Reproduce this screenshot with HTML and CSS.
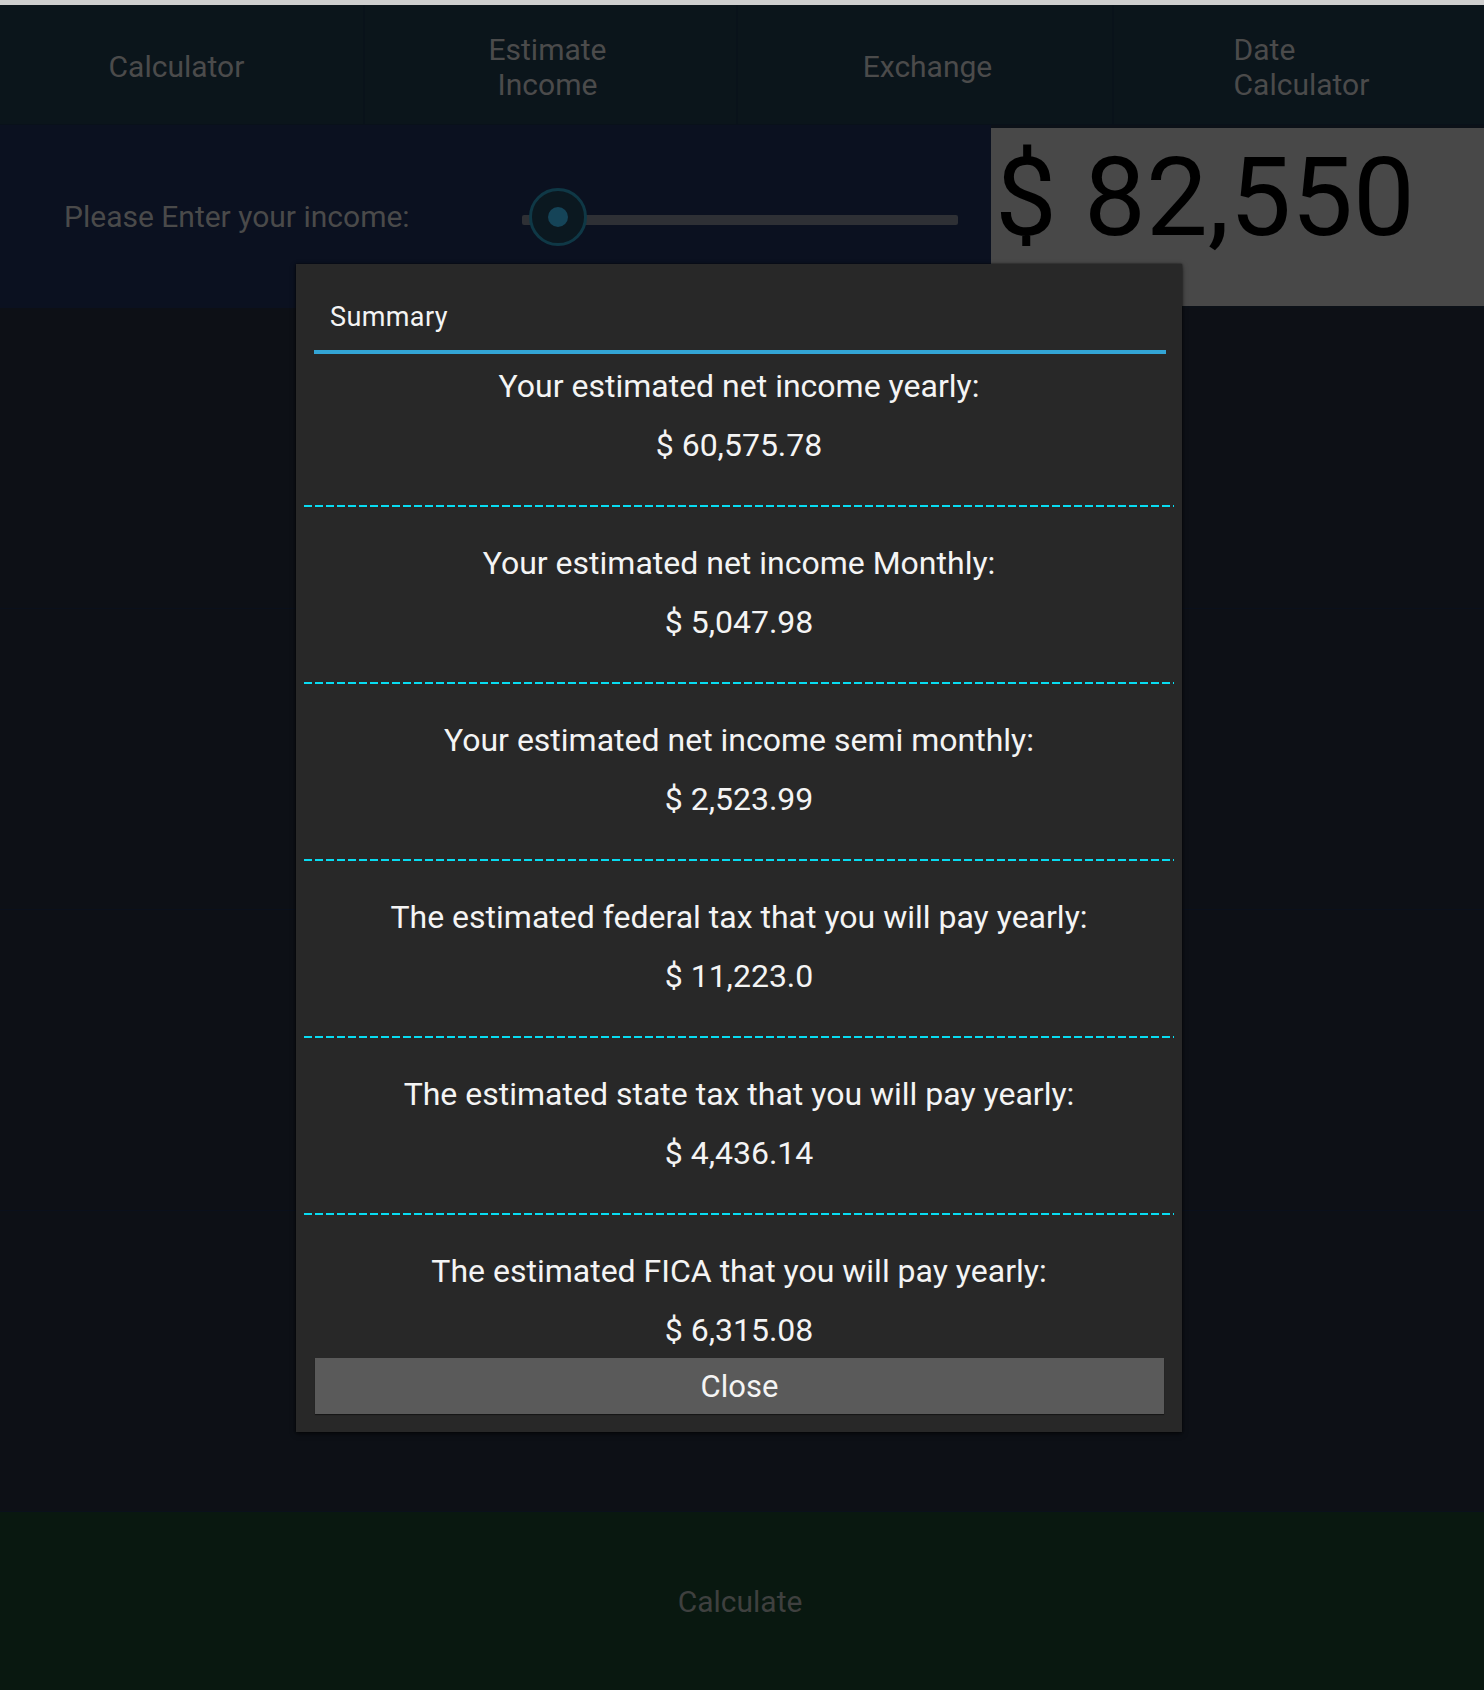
FILE: index.html
```html
<!DOCTYPE html>
<html lang="en">
<head>
<meta charset="utf-8">
<title>Estimate Income</title>
<link rel="stylesheet" href="styles.css">
</head>
<body>
<div class="topstrip"></div>
<nav class="tabs">
  <div class="tab tab-1"><span class="tab-label">Calculator</span></div>
  <div class="tab tab-2"><span class="tab-label center">Estimate<br>Income</span></div>
  <div class="tab tab-3"><span class="tab-label">Exchange</span></div>
  <div class="tab tab-4"><span class="tab-label left">Date<br>Calculator</span></div>
</nav>
<section class="income-row">
  <div class="income-input">
    <div class="income-label">Please Enter your income:</div>
    <div class="slider">
      <div class="slider-track"></div>
      <div class="slider-thumb"><div class="slider-dot"></div></div>
    </div>
  </div>
  <div class="income-value">$ 82,550</div>
</section>
<main class="rows">
  <div class="row"></div>
  <div class="row"></div>
  <div class="row"></div>
  <div class="row"></div>
</main>
<footer class="calc-bar">Calculate</footer>

<div class="dialog">
  <div class="dialog-title">Summary</div>
  <div class="dialog-scroll">
    <div class="item first">
      <div class="item-label">Your estimated net income yearly:</div>
      <div class="item-value">$ 60,575.78</div>
    </div>
    <div class="dash"></div>
    <div class="item">
      <div class="item-label">Your estimated net income Monthly:</div>
      <div class="item-value">$ 5,047.98</div>
    </div>
    <div class="dash"></div>
    <div class="item">
      <div class="item-label">Your estimated net income semi monthly:</div>
      <div class="item-value">$ 2,523.99</div>
    </div>
    <div class="dash"></div>
    <div class="item">
      <div class="item-label">The estimated federal tax that you will pay yearly:</div>
      <div class="item-value">$ 11,223.0</div>
    </div>
    <div class="dash"></div>
    <div class="item">
      <div class="item-label">The estimated state tax that you will pay yearly:</div>
      <div class="item-value">$ 4,436.14</div>
    </div>
    <div class="dash"></div>
    <div class="item">
      <div class="item-label">The estimated FICA that you will pay yearly:</div>
      <div class="item-value">$ 6,315.08</div>
    </div>
  </div>
  <div class="close-btn">Close</div>
</div>
</body>
</html>
```

FILE: styles.css
```css
* { box-sizing: border-box; }

html, body {
  margin: 0;
  padding: 0;
}

body {
  position: relative;
  width: 1484px;
  height: 1690px;
  overflow: hidden;
  background: #0d1016;
  font-family: Roboto, "Noto Sans", "Liberation Sans", sans-serif;
}

.topstrip {
  height: 5px;
  background: #cfcfcf;
}

.tabs {
  display: flex;
  height: 120px;
  background: #0b151b;
  border-bottom: 1px solid #09111a;
}

.tab {
  display: flex;
  align-items: center;
  justify-content: center;
  padding-top: 4px;
  border-right: 2px solid #09121a;
}

.tab-1 { width: 365px; padding-right: 10px; }
.tab-2 { width: 373px; padding-right: 6px; }
.tab-3 { width: 376px; padding-left: 5px; }
.tab-4 { flex: 1; border-right: none; padding-left: 5px; }

.tab-label {
  display: inline-block;
  font-size: 30px;
  line-height: 35px;
  color: #4b4b4b;
}

.tab-label.center { text-align: center; }
.tab-label.left { text-align: left; }

.income-row {
  display: flex;
  height: 183px;
  background: #0c1118;
}

.income-input {
  flex: 1;
  display: flex;
  align-items: center;
  background: #0b1120;
}

.income-label {
  width: 522px;
  padding-left: 64px;
  font-size: 30px;
  color: #4a4a4a;
}

.slider {
  position: relative;
  width: 436px;
  height: 58px;
}

.slider-track {
  position: absolute;
  left: 0;
  right: 0;
  top: 27px;
  height: 10px;
  border-radius: 2px;
  background: #2e3035;
}

.slider-thumb {
  position: absolute;
  left: 7px;
  top: 0;
  width: 58px;
  height: 58px;
  border-radius: 50%;
  border: 3px solid #0f3846;
  background: #0b1820;
  display: flex;
  align-items: center;
  justify-content: center;
}

.slider-dot {
  width: 20px;
  height: 20px;
  border-radius: 50%;
  background: #154458;
}

.income-value {
  width: 493px;
  height: 178px;
  margin-top: 3px;
  padding: 5px 0 0 4px;
  background: #484848;
  color: #000;
  font-size: 110px;
  line-height: normal;
  white-space: nowrap;
}

.rows {
  display: flex;
  flex-direction: column;
}

.row {
  height: 301px;
  border-bottom: 1px solid #0a101c;
}

.calc-bar {
  height: 178px;
  display: flex;
  align-items: center;
  justify-content: center;
  padding-right: 4px;
  background: #091810;
  color: #3f403f;
  font-size: 30px;
}

.dialog {
  position: absolute;
  left: 296px;
  top: 264px;
  width: 886px;
  height: 1168px;
  padding: 0 8px;
  background: #282828;
  box-shadow: 0 0 2px rgba(0, 0, 0, 0.7), 0 2px 5px rgba(0, 0, 0, 0.5);
  display: flex;
  flex-direction: column;
  color: #f4f4f4;
}

.dialog-title {
  margin: 0 8px 0 10px;
  padding: 39px 0 18px 16px;
  font-size: 27px;
  line-height: 29px;
  letter-spacing: 0.4px;
  border-bottom: 4px solid #33a5d5;
}

.dialog-scroll {
  height: 1004px;
  overflow: hidden;
  flex: none;
}

.item {
  text-align: center;
  padding: 38px 0 42px;
}

.item.first { padding-top: 14px; }

.item-label,
.item-value {
  font-size: 32px;
  line-height: 36px;
  white-space: nowrap;
}

.item-value { margin-top: 23px; }

.dash {
  height: 2px;
  background: repeating-linear-gradient(90deg, #08dcf2 0 8px, transparent 8px 11px);
}

.close-btn {
  margin: 0 10px 0 11px;
  height: 56px;
  display: flex;
  align-items: center;
  justify-content: center;
  background: #5a5a5a;
  box-shadow: 0 1px 1px rgba(0, 0, 0, 0.45);
  font-size: 31px;
  color: #f4f4f4;
}
```
